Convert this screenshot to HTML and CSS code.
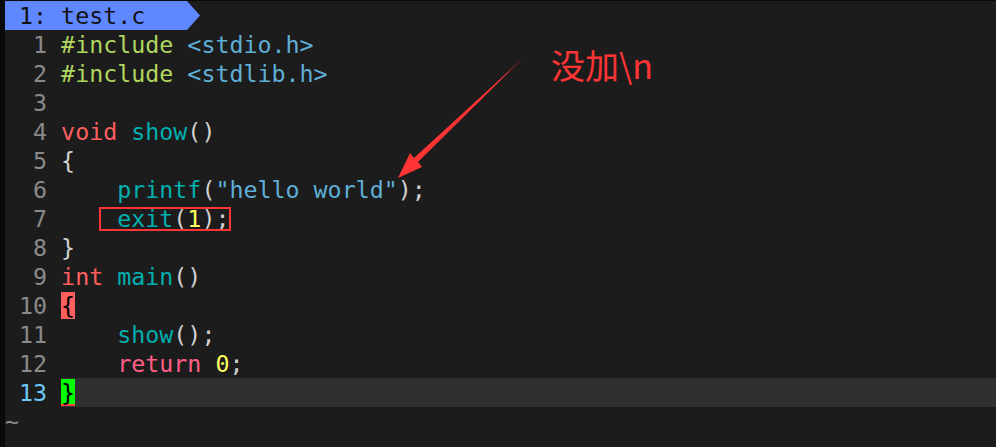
FILE: index.html
```html
<!DOCTYPE html>
<html lang="en">
<head>
    <meta charset="UTF-8">
    <title>vim - test.c</title>
    <link rel="stylesheet" href="styles.css">
</head>
<body>
    <div class="editor">
        <div class="tabline">
            <span class="tab"> 1: test.c</span>
        </div>

        <div class="buffer">
            <div class="line"><span class="nr">  1 </span><span class="code"><span class="pre">#include</span> <span class="inc">&lt;stdio.h&gt;</span></span></div>
            <div class="line"><span class="nr">  2 </span><span class="code"><span class="pre">#include</span> <span class="inc">&lt;stdlib.h&gt;</span></span></div>
            <div class="line"><span class="nr">  3 </span><span class="code"></span></div>
            <div class="line"><span class="nr">  4 </span><span class="code"><span class="type">void</span> <span class="fn">show</span><span class="op">()</span></span></div>
            <div class="line"><span class="nr">  5 </span><span class="code"><span class="op">{</span></span></div>
            <div class="line"><span class="nr">  6 </span><span class="code">    <span class="fn">printf</span><span class="op">(</span><span class="str">"hello world"</span><span class="op">);</span></span></div>
            <div class="line"><span class="nr">  7 </span><span class="code">    <span class="fn">exit</span><span class="op">(</span><span class="num">1</span><span class="op">);</span></span></div>
            <div class="line"><span class="nr">  8 </span><span class="code"><span class="op">}</span></span></div>
            <div class="line"><span class="nr">  9 </span><span class="code"><span class="type">int</span> <span class="fn">main</span><span class="op">()</span></span></div>
            <div class="line"><span class="nr"> 10 </span><span class="code"><span class="match-open">{</span></span></div>
            <div class="line"><span class="nr"> 11 </span><span class="code">    <span class="fn">show</span><span class="op">();</span></span></div>
            <div class="line"><span class="nr"> 12 </span><span class="code">    <span class="kw">return</span> <span class="num">0</span><span class="op">;</span></span></div>
            <div class="line current"><span class="nr"> 13 </span><span class="code"><span class="cursor">}</span></span></div>
            <div class="line"><span class="tilde">~</span></div>
        </div>

        <!-- annotation drawn over the screenshot -->
        <div class="mark-box"></div>
        <svg class="mark-arrow" width="996" height="447" viewBox="0 0 996 447">
            <polygon points="523,58 418,162 422,167 398,178 410,153 414,158" fill="#ff3434"/>
        </svg>
        <div class="mark-note">没加\n</div>
    </div>
</body>
</html>
```

FILE: styles.css
```css
/* General */
body {
    margin: 0;
    padding: 0;
    background: #1c1c1c;
}

.editor {
    position: relative;
    width: 996px;
    height: 447px;
    overflow: hidden;
    background: #1c1c1c;
    border-left: 5px solid #0a0a0a;
    border-top: 1px solid #0a0a0a;
    box-sizing: border-box;
    font-family: "DejaVu Sans Mono", monospace;
    font-size: 23.3px;
    line-height: 29px;
    color: #d0d0d0;
}

/* Tab line */
.tabline {
    height: 29px;
    display: flex;
}

.tab {
    position: relative;
    width: 182px;
    background: #5f87ff;
    color: #121212;
    white-space: pre;
}

.tab::after {
    content: "";
    position: absolute;
    top: 0;
    right: -13px;
    width: 13px;
    height: 29px;
    background: #5f87ff;
    clip-path: polygon(0 0, 100% 50%, 0 100%);
}

/* Buffer */
.buffer {
    display: flex;
    flex-direction: column;
}

.line {
    height: 29px;
    display: flex;
    white-space: pre;
}

.nr {
    color: #8a8a8a;
}

.code {
    flex: 1;
    white-space: pre;
}

.pre { color: #afd75f; }
.inc { color: #5fafd7; }
.type { color: #ff5f5f; }
.kw { color: #ff5f87; }
.fn { color: #00afaf; }
.op { color: #d0d0d0; }
.str { color: #5fafd7; }
.num { color: #ffff5f; }

.match-open {
    background: #ff5f5f;
    color: #000;
}

.current .nr {
    color: #6cc8f8;
}

.current .code {
    background: #303030;
}

.cursor {
    background: #00ff00;
    color: #000;
    box-shadow: inset 0 -2px #ff4040;
}

.tilde {
    color: #8a8a8a;
}

/* Annotation */
.mark-box {
    position: absolute;
    left: 94px;
    top: 206px;
    width: 128px;
    height: 20px;
    border: 2.5px solid #ff3434;
}

.mark-arrow {
    position: absolute;
    left: -5px;
    top: -1px;
}

.mark-note {
    position: absolute;
    left: 546px;
    top: 42px;
    font-family: "Noto Sans CJK SC", "Noto Sans", sans-serif;
    font-size: 34px;
    line-height: 44px;
    color: #ff3434;
}
```
